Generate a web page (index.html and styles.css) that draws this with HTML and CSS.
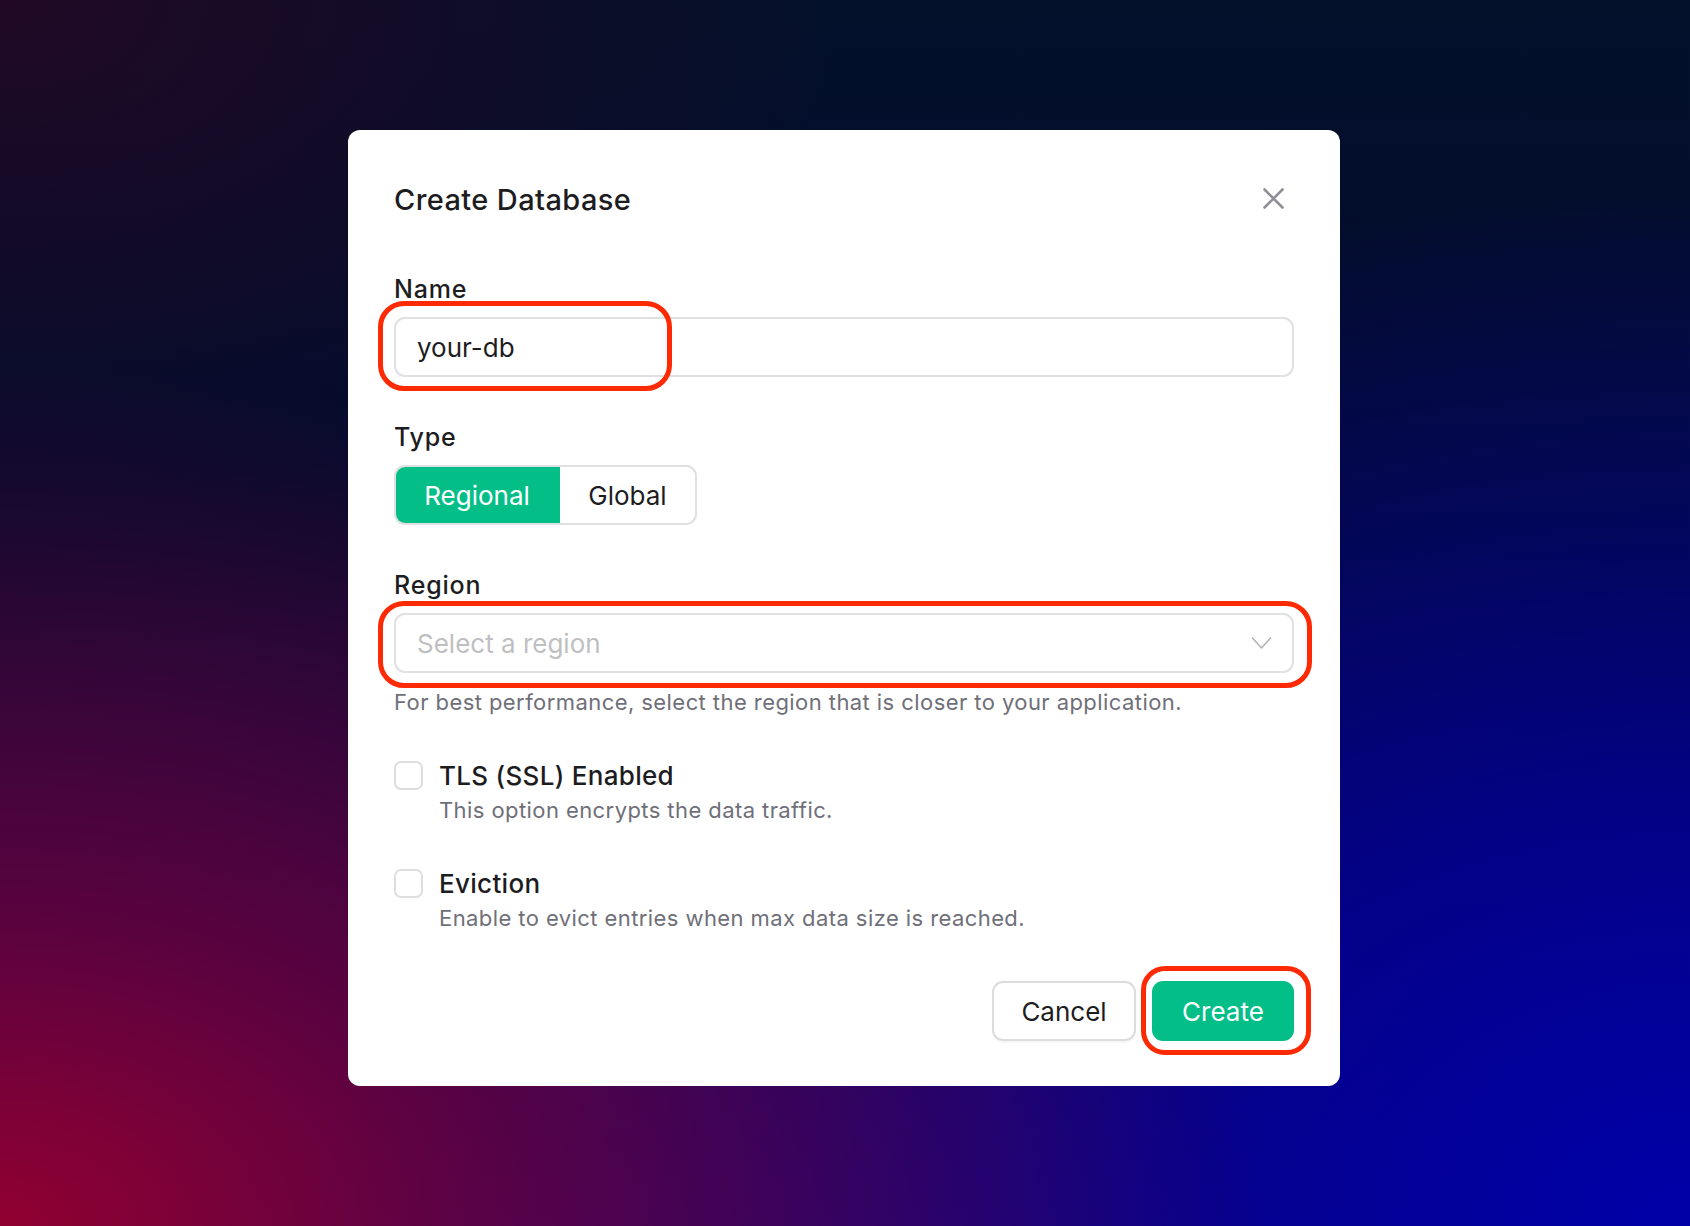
FILE: index.html
```html
<!DOCTYPE html>
<html lang="en">
<head>
<meta charset="utf-8">
<title>Create Database</title>
<link rel="stylesheet" href="styles.css">
</head>
<body>
  <div class="modal">
    <div class="modal-header">
      <h1 class="modal-title">Create Database</h1>
      <button class="close-btn" aria-label="Close">
        <svg width="21" height="21" viewBox="0 0 21 21"><path d="M1.5 1.5 L19.5 19.5 M19.5 1.5 L1.5 19.5" stroke="#8f8f97" stroke-width="2.6" stroke-linecap="round" fill="none"/></svg>
      </button>
    </div>

    <div class="field">
      <div class="label">Name</div>
      <div class="control-wrap">
        <div class="input">your-db</div>
        <span class="mark mark-name"></span>
      </div>
    </div>

    <div class="field">
      <div class="label">Type</div>
      <div class="segmented">
        <div class="seg seg-active">Regional</div>
        <div class="seg seg-plain">Global</div>
      </div>
    </div>

    <div class="field field-region">
      <div class="label">Region</div>
      <div class="control-wrap">
        <div class="input select">
          <span class="placeholder">Select a region</span>
          <svg class="chevron" width="21" height="14" viewBox="0 0 21 14"><path d="M1 1.5 L10.5 12 L20 1.5" stroke="#b4b4b8" stroke-width="1.6" fill="none" stroke-linejoin="round"/></svg>
        </div>
        <span class="mark mark-region"></span>
      </div>
      <div class="help">For best performance, select the region that is closer to your application.</div>
    </div>

    <div class="check-row">
      <span class="checkbox"></span>
      <div class="check-text">
        <div class="check-label">TLS (SSL) Enabled</div>
        <div class="check-desc">This option encrypts the data traffic.</div>
      </div>
    </div>

    <div class="check-row">
      <span class="checkbox"></span>
      <div class="check-text">
        <div class="check-label">Eviction</div>
        <div class="check-desc">Enable to evict entries when max data size is reached.</div>
      </div>
    </div>

    <div class="footer">
      <button class="btn btn-default">Cancel</button>
      <div class="control-wrap">
        <button class="btn btn-primary">Create</button>
        <span class="mark mark-create"></span>
      </div>
    </div>
  </div>
</body>
</html>
```

FILE: styles.css
```css
* { box-sizing: border-box; }

html, body {
  margin: 0;
  height: 100%;
}

body {
  width: 1690px;
  height: 1226px;
  overflow: hidden;
  padding-top: 130px;
  font-family: "Inter", "Liberation Sans", sans-serif;
  color: #1d1d1f;
  background:
    radial-gradient(75% 70% at 0% 100%, rgba(145, 0, 48, 1) 0%, rgba(115, 0, 58, 0.75) 35%, rgba(70, 0, 60, 0) 100%),
    radial-gradient(80% 85% at 100% 100%, rgba(0, 0, 168, 1) 0%, rgba(0, 0, 150, 0.8) 40%, rgba(0, 0, 120, 0) 100%),
    radial-gradient(50% 40% at 0% 0%, rgba(36, 8, 36, 0.9) 0%, rgba(36, 8, 36, 0) 100%),
    linear-gradient(180deg, #02102a 0%, #040a2e 45%, #1d0760 100%);
}

.modal {
  width: 992px;
  height: 956px;
  margin: 0 0 0 348px;
  background: #ffffff;
  border-radius: 12px;
  padding: 50px 46px 45px 46px;
  display: flex;
  flex-direction: column;
}

.modal-header {
  display: flex;
  align-items: center;
  justify-content: space-between;
  height: 40px;
}

.modal-title {
  margin: 0;
  font-size: 29px;
  line-height: 40px;
  font-weight: 500;
  letter-spacing: 0.4px;
  color: #1d1d1f;
}

.close-btn {
  border: 0;
  background: transparent;
  padding: 0;
  margin: -4px 10px 0 0;
  width: 21px;
  height: 21px;
  display: flex;
}

.field {
  margin-top: 53px;
}

.field + .field {
  margin-top: 44px;
}

.label {
  font-size: 25px;
  line-height: 32px;
  font-weight: 500;
  letter-spacing: 0.8px;
  color: #1d1d1f;
  margin-bottom: 12px;
}

.control-wrap {
  position: relative;
}

.input {
  height: 60px;
  border: 2px solid #e0e0e2;
  border-radius: 11px;
  padding: 0 21px;
  display: flex;
  align-items: center;
  font-size: 26px;
  color: #1d1d1f;
}

.select {
  justify-content: space-between;
}

.placeholder {
  color: #bfbfc2;
}

.chevron {
  margin-right: -1px;
}

.segmented {
  display: inline-flex;
  height: 60px;
  border: 2px solid #e0e0e2;
  border-radius: 11px;
  overflow: hidden;
}

.seg {
  display: flex;
  align-items: center;
  justify-content: center;
  font-size: 26px;
  color: #1d1d1f;
}

.seg-active {
  background: #03bf87;
  color: #ffffff;
  margin: -2px 0 -2px -2px;
  width: 166px;
}

.seg-plain {
  width: 135px;
}

.help {
  margin-top: 14px;
  font-size: 22px;
  line-height: 30px;
  color: #6f6f79;
  letter-spacing: 0.43px;
}

.check-row {
  display: flex;
  align-items: flex-start;
  gap: 16px;
  margin-top: 42px;
}

.check-row + .check-row {
  margin-top: 42px;
}

.checkbox {
  flex: none;
  width: 29px;
  height: 29px;
  margin-top: 2px;
  border: 2px solid #dedee0;
  border-radius: 7px;
  background: #fff;
}

.check-label {
  font-size: 26px;
  line-height: 34px;
  font-weight: 500;
  letter-spacing: 0.3px;
  color: #1d1d1f;
}

.check-desc {
  margin-top: 2px;
  font-size: 22px;
  line-height: 30px;
  color: #6f6f79;
  letter-spacing: 0.42px;
}

.footer {
  margin-top: auto;
  display: flex;
  justify-content: flex-end;
  gap: 16px;
}

.btn {
  height: 60px;
  padding: 0 30px;
  border-radius: 11px;
  font-family: inherit;
  font-size: 26px;
  display: flex;
  align-items: center;
  justify-content: center;
}

.btn-default {
  width: 144px;
  background: #ffffff;
  border: 2px solid #dcdcde;
  color: #1d1d1f;
  box-shadow: 0 2px 0 rgba(0, 0, 0, 0.03);
}

.btn-primary {
  width: 142px;
  background: #03bf87;
  border: 0;
  color: #ffffff;
}

.mark {
  position: absolute;
  border: 5px solid #fe2a04;
  pointer-events: none;
}

.mark-name {
  left: -16px;
  top: -16px;
  width: 294px;
  height: 90px;
  border-radius: 26px;
}

.mark-region {
  left: -16px;
  top: -12px;
  width: 934px;
  height: 87px;
  border-radius: 26px;
}

.mark-create {
  left: -11px;
  top: -15px;
  width: 170px;
  height: 89px;
  border-radius: 24px;
}
```
